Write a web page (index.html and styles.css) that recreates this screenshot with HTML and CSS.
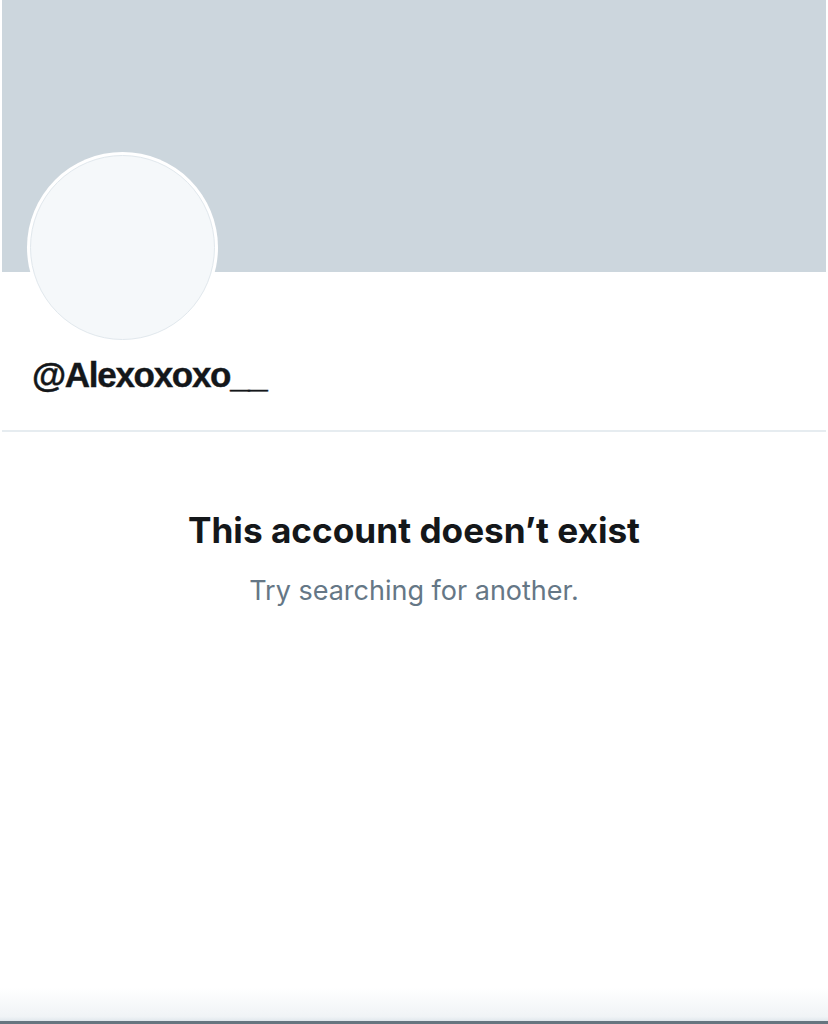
FILE: index.html
```html
<!DOCTYPE html>
<html>
<head>
<meta charset="utf-8">
<link rel="stylesheet" href="styles.css">
</head>
<body>
<div class="page">
  <div class="banner"></div>
  <div class="profile">
    <div class="avatar"><div class="avatar-inner"></div></div>
    <div class="handle">@Alexoxoxo__</div>
  </div>
  <div class="empty">
    <div class="title">This account doesn’t exist</div>
    <div class="subtitle">Try searching for another.</div>
  </div>
</div>
<div class="bottom"></div>
</body>
</html>
```
FILE: styles.css
```css
html, body {
  margin: 0;
  padding: 0;
  background: #ffffff;
  height: 1024px;
  overflow: hidden;
}
body {
  display: flex;
  flex-direction: column;
}
.page {
  flex: 1;
  padding: 0 2px;
  display: flex;
  flex-direction: column;
}
.banner {
  height: 272px;
  background: #ccd6dd;
}
.profile {
  padding: 0 0 0 25px;
  border-bottom: 2px solid #e6ecf0;
  height: 160px;
  box-sizing: border-box;
}
.avatar {
  width: 191px;
  height: 191px;
  border-radius: 50%;
  background: #ffffff;
  margin-top: -120px;
  padding: 3px;
  box-sizing: border-box;
}
.avatar-inner {
  width: 100%;
  height: 100%;
  border-radius: 50%;
  background: #f5f8fa;
  border: 1px solid #e1e8ed;
  box-sizing: border-box;
}
.handle {
  font-family: "Liberation Sans", Arial, sans-serif;
  font-weight: bold;
  font-size: 35px;
  letter-spacing: -1.3px;
  color: #14171a;
  margin: 12px 0 0 5px;
  line-height: 40px;
  -webkit-text-stroke: 0.4px #14171a;
}
.empty {
  display: flex;
  flex-direction: column;
  align-items: center;
  padding-top: 76px;
  font-family: Inter, "Noto Sans", sans-serif;
}
.title {
  font-weight: 700;
  font-size: 35.2px;
  color: #14171a;
  line-height: 44px;
}
.subtitle {
  font-size: 27px;
  color: #657786;
  margin-top: 24px;
  line-height: 30px;
}
.bottom {
  height: 36px;
  background: linear-gradient(to bottom, rgba(230,236,240,0) 0%, rgba(225,232,237,0.5) 80%, #e1e8ed 91%, #66757f 91%, #66757f 100%);
}
```
